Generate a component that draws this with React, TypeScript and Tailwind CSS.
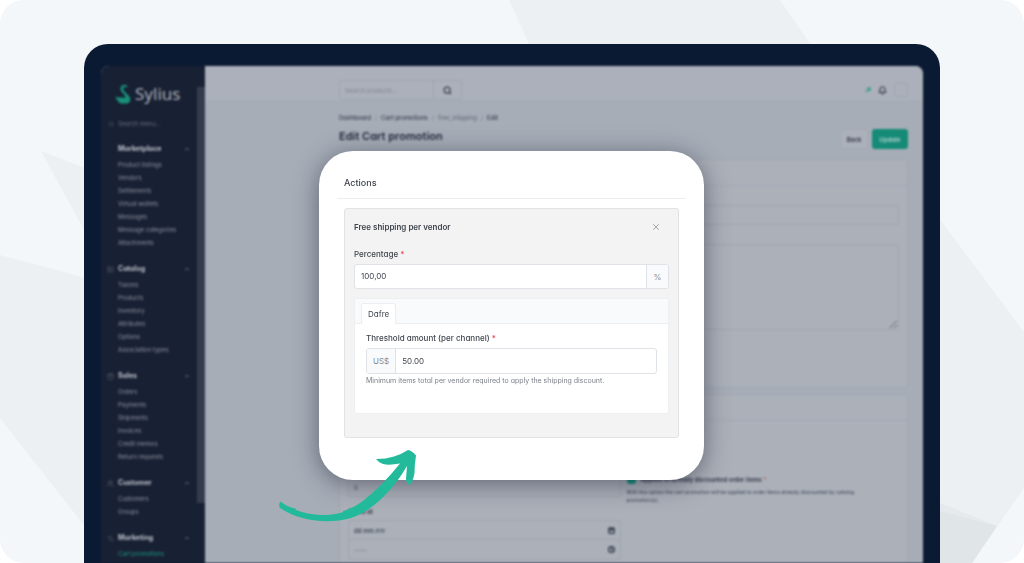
import React from "react";
import {
  Bell,
  Calendar,
  ChevronUp,
  Clock,
  LayoutList,
  Percent,
  Search,
  ShoppingBag,
  Users,
  X,
} from "lucide-react";

type MenuGroup = {
  title: string;
  icon?: React.ComponentType<{ className?: string }>;
  items: string[];
  active?: string;
};

const menu: MenuGroup[] = [
  {
    title: "Marketplace",
    items: [
      "Product listings",
      "Vendors",
      "Settlements",
      "Virtual wallets",
      "Messages",
      "Message categories",
      "Attachments",
    ],
  },
  {
    title: "Catalog",
    icon: LayoutList,
    items: ["Taxons", "Products", "Inventory", "Attributes", "Options", "Association types"],
  },
  {
    title: "Sales",
    icon: ShoppingBag,
    items: ["Orders", "Payments", "Shipments", "Invoices", "Credit memos", "Return requests"],
  },
  { title: "Customer", icon: Users, items: ["Customers", "Groups"] },
  {
    title: "Marketing",
    icon: Percent,
    items: ["Cart promotions", "Catalog promotions"],
    active: "Cart promotions",
  },
];

function Backdrop() {
  return (
    <svg
      className="absolute inset-0 h-full w-full"
      viewBox="0 0 1024 563"
      preserveAspectRatio="none"
      aria-hidden="true"
    >
      <g fill="#ecf0f3">
        <path d="M509 0H780L813 48H531Z" />
        <path d="M41 151L90 170V241Z" />
        <path d="M0 255L90 279V533L0 418Z" />
        <path d="M936 214L1024 332V488L972 563H936Z" />
      </g>
      <path d="M936 501L997 526L972 563H936Z" fill="#e6eaee" />
      <path d="M936 510L997 526L972 563H936Z" fill="#e0e5e8" />
    </svg>
  );
}

function Logo() {
  return (
    <div className="flex h-6 items-center gap-1 pl-[14px]">
      <svg className="h-5 w-4" viewBox="93 131 50 62" aria-hidden="true">
        <path
          d="M110 147Q109 136 121 133Q131 132 133 142Q128 139 122 140Q117 142 119 148Q122 154 130 161Q141 170 141 180Q139 191 129 192H111Q104 189 102 183Q96 179 94 170Q103 174 113 172L125 175Q127 168 119 161Q111 154 110 147Z"
          fill="#179079"
        />
      </svg>
      <span className="font-['Noto_Sans'] text-[17px] leading-6 text-[#a9adb7]">Sylius</span>
    </div>
  );
}

function Sidebar() {
  return (
    <aside className="flex w-26 shrink-0 bg-[#182033]">
      <div className="min-w-0 flex-1 pt-4">
        <Logo />
        <label className="mt-3 flex h-3 items-center gap-1 pl-[7px] text-[#596071]">
          <Search className="size-[6px]" />
          <input
            type="text"
            aria-label="Search menu"
            placeholder="Search menu..."
            className="w-16 bg-transparent text-[6px] leading-3 outline-none placeholder:text-[#666d7d]"
          />
        </label>
        <nav className="mt-[10px] flex flex-col gap-[11px]">
          {menu.map(({ title, icon: Icon, items, active }) => (
            <section key={title}>
              <button
                type="button"
                className="flex h-[18px] w-full items-center pr-[7px] pl-[6px] text-[7px] font-bold text-[#bdc1ca]"
              >
                <span className="flex w-[11px] text-[#5a6172]">
                  {Icon && <Icon className="size-[7px]" />}
                </span>
                <span className="flex-1 text-left">{title}</span>
                <ChevronUp className="size-[6px] text-[#8b909d]" strokeWidth={3} />
              </button>
              <ul>
                {items.map((item) => (
                  <li key={item} className="h-[13px] pl-[17px] text-[6px] leading-[13px] whitespace-nowrap">
                    <a href="#" className={item === active ? "text-[#1b9c83]" : "text-[#8d92a0]"}>
                      {item}
                    </a>
                  </li>
                ))}
              </ul>
            </section>
          ))}
        </nav>
      </div>
      <div className="w-2 shrink-0 pt-[21px]">
        <div className="h-[416px] bg-[#343b4c]" />
      </div>
    </aside>
  );
}

const fieldClass =
  "w-full rounded-[3px] border border-[#9ea4b0] bg-transparent px-[5px] text-[6px] text-[#3b4252] outline-none placeholder:text-[#878d9a]";

function TopBar() {
  return (
    <header className="flex h-9 items-end justify-between border-b border-[#a4aab5] bg-[#acb0ba] pr-[15px] pb-px pl-[134px]">
      <form className="flex h-5 w-[123px] rounded-[3px] border border-[#9ea4b0]">
        <input
          type="text"
          aria-label="Search products"
          placeholder="Search products..."
          className="min-w-0 flex-1 bg-transparent px-[5px] text-[6px] outline-none placeholder:text-[#7f8592]"
        />
        <button
          type="button"
          aria-label="Search"
          className="flex w-7 items-center justify-center border-l border-[#9ea4b0] text-[#343b4b]"
        >
          <Search className="size-[9px]" strokeWidth={3} />
        </button>
      </form>
      <div className="flex h-5 items-center gap-[7px]">
        <svg className="size-[6px]" viewBox="0 0 6 6" aria-hidden="true">
          <path d="M2 1H5V4M5 1L1 5" stroke="#259a83" strokeWidth="1.2" fill="none" />
        </svg>
        <Bell className="size-[9px] text-[#3f4656]" strokeWidth={3} />
        <span className="size-[14px] rounded-[3px] border border-[#9ea4b0]" />
      </div>
    </header>
  );
}

function PageHeading() {
  return (
    <div className="flex items-end justify-between pt-[9px]">
      <div>
        <nav className="flex h-3 items-center gap-1 text-[6px] font-medium text-[#363d4d]">
          <a href="#">Dashboard</a>
          <span className="text-[#838a97]">/</span>
          <a href="#">Cart promotions</a>
          <span className="text-[#838a97]">/</span>
          <span className="text-[#6b7280]">free_shipping</span>
          <span className="text-[#838a97]">/</span>
          <span>Edit</span>
        </nav>
        <h1 className="mt-[5px] mb-[5px] text-[11px] leading-4 font-semibold text-[#232a3b]">
          Edit Cart promotion
        </h1>
      </div>
      <div className="flex gap-1 text-[6px] font-semibold">
        <button
          type="button"
          className="h-5 w-7 rounded-[3px] border border-[#a2a8b4] bg-[#acb0ba] text-[#2d3444]"
        >
          Back
        </button>
        <button type="button" className="h-5 w-9 rounded-[3px] bg-[#158a76] text-[#b2d3d0]">
          Update
        </button>
      </div>
    </div>
  );
}

function Screen() {
  return (
    <div className="flex flex-1 overflow-hidden rounded-t-[8px] bg-[#a6adb7] blur-[1px]">
      <Sidebar />
      <main className="min-w-0 flex-1">
        <TopBar />
        <div className="flex flex-col pr-[15px] pl-[134px]">
          <PageHeading />
          <section className="mt-[10px] h-[229px] rounded-[3px] border border-[#a1a7b2] bg-[#abb0b9]">
            <div className="h-[26px] border-b border-[#a3a8b4]" />
            <div className="flex flex-col gap-[19px] px-2 pt-[19px]">
              <input type="text" aria-label="Name" className={`${fieldClass} h-5`} />
              <textarea aria-label="Description" className={`${fieldClass} h-[86px] resize`} />
            </div>
          </section>
          <section className="mt-[6px] h-[229px] rounded-[3px] border border-[#a1a7b2] bg-[#abb0b9]">
            <div className="h-[26px] border-b border-[#a3a8b4]" />
            <div className="grid grid-cols-2 gap-[6px] px-2 pt-[53px]">
              <div className="pt-[3px]">
                <input type="text" aria-label="Priority" defaultValue="0" className={`${fieldClass} block h-5`} />
                <label
                  htmlFor="starts-date"
                  className="mt-[10px] block text-[6px] leading-[10px] font-semibold text-[#2d3444]"
                >
                  Starts at
                </label>
                <div className="mt-[3px] rounded-[3px] border border-[#9ea4b0] text-[#2d3444]">
                  <div className="flex h-[19px] items-center border-b border-[#9ea4b0] px-[5px]">
                    <input
                      id="starts-date"
                      type="text"
                      placeholder="dd.mm.rrrr"
                      className="min-w-0 flex-1 bg-transparent text-[6px] font-medium outline-none placeholder:text-[#2d3444]"
                    />
                    <Calendar className="size-[7px]" strokeWidth={4} />
                  </div>
                  <div className="flex h-[19px] items-center px-[5px]">
                    <input
                      type="text"
                      aria-label="Start time"
                      placeholder="--:--"
                      className="min-w-0 flex-1 bg-transparent text-[6px] outline-none placeholder:text-[#5d6472]"
                    />
                    <Clock className="size-[7px]" strokeWidth={4} />
                  </div>
                </div>
              </div>
              <div>
                <label className="flex h-[10px] items-center gap-[5px] text-[6px] font-semibold text-[#2d3444]">
                  <input
                    type="checkbox"
                    defaultChecked
                    className="size-[9px] appearance-none rounded-[3px] bg-[#15907a]"
                  />
                  <span>
                    Applies to already discounted order items <span className="text-[#b8505f]">*</span>
                  </span>
                </label>
                <p className="mt-1 max-w-[250px] text-[5px] leading-2 font-medium text-[#4a5161]">
                  With this option the cart promotion will be applied to order items already discounted by catalog
                  promotion(s).
                </p>
              </div>
            </div>
          </section>
        </div>
      </main>
    </div>
  );
}

function ActionsDialog() {
  return (
    <div
      role="dialog"
      aria-labelledby="actions-title"
      className="w-[385px] rounded-[34px] bg-white px-[18px] pt-6 pb-[42px] text-[8px] text-[#3f454d] shadow-[0_4px_24px_rgba(25,25,45,0.5)]"
    >
      <h2 id="actions-title" className="border-b border-[#ededef] px-[7px] pb-[7px] text-[9px] leading-4 font-medium">
        Actions
      </h2>
      <section className="mx-[7px] mt-[9px] rounded-[3px] border border-[#e2e2e3] bg-[#f3f3f3] px-[9px] pt-3 pb-[23px]">
        <div className="flex h-3 items-center justify-between pr-2">
          <h3 className="font-semibold">Free shipping per vendor</h3>
          <button type="button" aria-label="Remove action" className="text-[#94969b]">
            <X className="size-[10px]" />
          </button>
        </div>
        <label htmlFor="percentage" className="mt-[15px] block leading-3 font-medium">
          Percentage <span className="text-[#e0424b]">*</span>
        </label>
        <div className="mt-1 flex h-[25px] overflow-hidden rounded-[3px] border border-[#dfe2e6] bg-white">
          <input
            id="percentage"
            type="text"
            defaultValue="100,00"
            className="min-w-0 flex-1 px-[6px] pb-px outline-none"
          />
          <span className="flex w-[22px] items-center justify-center border-l border-[#dfe2e6] bg-[#f9fafc] text-[#8a8f96]">
            %
          </span>
        </div>
        <div className="mt-[9px] overflow-hidden rounded-[3px] border border-[#edeff1] bg-white">
          <div className="flex h-[25px] items-end border-b border-[#eceef1] bg-[#f9fafc] px-[6px]">
            <button
              type="button"
              className="-mb-px h-[21px] rounded-t-[3px] border border-b-0 border-[#eceef1] bg-white px-[6px] pb-px"
            >
              Dafre
            </button>
          </div>
          <div className="px-[11px] pt-2 pb-[26px]">
            <label htmlFor="threshold" className="block leading-3 font-medium">
              Threshold amount (per channel) <span className="text-[#e0424b]">*</span>
            </label>
            <div className="mt-1 flex h-[26px] overflow-hidden rounded-[3px] border border-[#dfe2e6]">
              <span className="flex items-center border-r border-[#dfe2e6] bg-[#f9fafc] px-[6px] pb-px text-[#858b93]">
                US$
              </span>
              <input
                id="threshold"
                type="text"
                defaultValue="50.00"
                className="min-w-0 flex-1 px-[6px] pb-px outline-none"
              />
            </div>
            <p className="mt-px text-[7px] leading-3 text-[#7b8087]">
              Minimum items total per vendor required to apply the shipping discount.
            </p>
          </div>
        </div>
      </section>
    </div>
  );
}

function PointerArrow() {
  return (
    <svg className="absolute top-[298px] -left-[41px] h-[74px] w-[139px]" viewBox="278 449 139 74" aria-hidden="true">
      <path
        d="M280.500 501.500Q287 507 295.500 508.500L296 510Q308 515 325 515Q336 514.500 343 512V511Q354 508 364 500Q382 486 400 463.500Q389 465.500 383 464Q379 463 376 459Q386 459 394 456.500Q402 454 408 450Q412 450.500 416 455.500Q414.500 465 414.500 473Q413 482 409.500 485Q406 483 406 479L407 466Q397 483 387 493Q364 518 339 520.500Q304 524 280 508Q278 505 280.500 501.500Z"
        fill="#23ba9b"
      />
    </svg>
  );
}

export default function App() {
  return (
    <div className="h-screen bg-white font-['Inter',sans-serif] [font-feature-settings:'cv11']">
      <div className="relative flex h-full flex-col overflow-hidden rounded-[24px] bg-[#f3f7fa]">
        <Backdrop />
        <div className="relative mx-[84px] mt-11 flex min-h-0 flex-1 flex-col overflow-hidden rounded-t-[24px] bg-[#0b1a33] px-[17px] pt-[22px]">
          <Screen />
        </div>
        <div className="absolute inset-0 flex items-start justify-center pt-[151px] pr-px">
          <div className="relative">
            <ActionsDialog />
            <PointerArrow />
          </div>
        </div>
      </div>
    </div>
  );
}
